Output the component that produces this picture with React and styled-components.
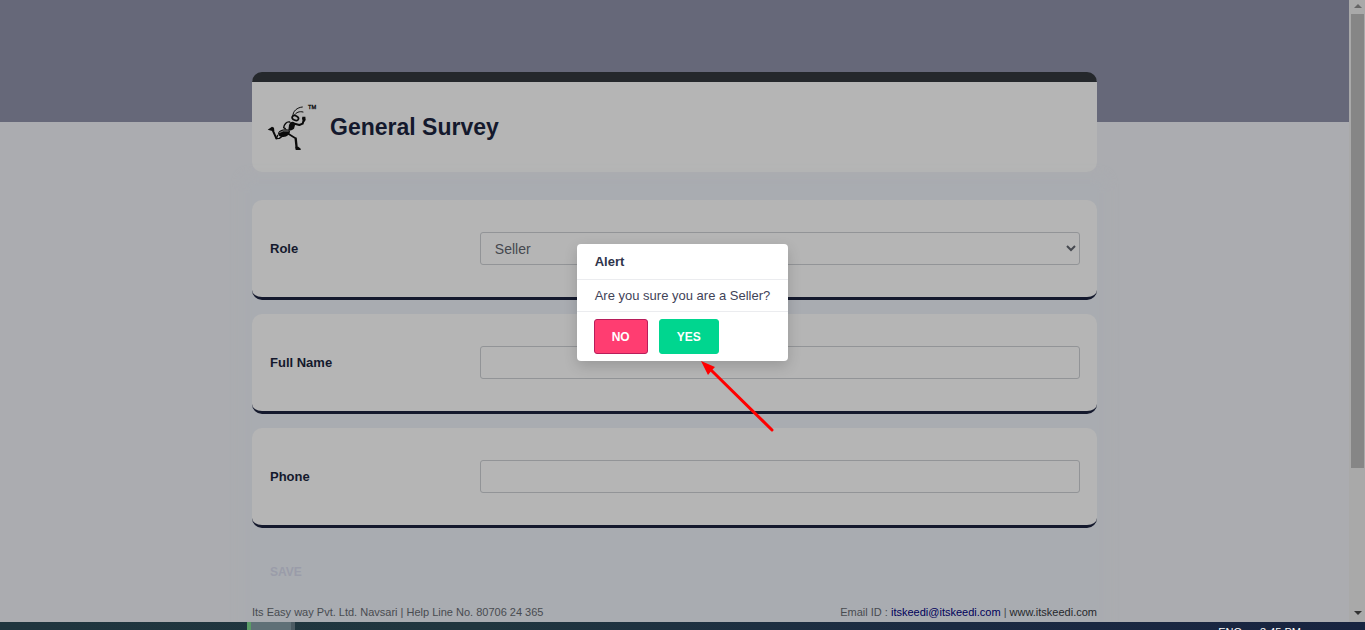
import React from 'react';
import styled, { createGlobalStyle } from 'styled-components';

const GlobalStyle = createGlobalStyle`
  *, *::before, *::after { box-sizing: border-box; }
  body {
    margin: 0;
    font-family: "Liberation Sans", Arial, sans-serif;
    font-size: 13px;
    color: #14192d;
  }
`;

const Screen = styled.div`
  position: relative;
  display: flex;
  flex-direction: column;
  height: 100vh;
  overflow: hidden;
`;

const Browser = styled.div`
  display: flex;
  flex: 1;
  min-height: 0;
`;

const Page = styled.main`
  flex: 1;
  min-width: 0;
  overflow: hidden;
  padding: 72px 16px 0;
  background: linear-gradient(#666879 122px, #abacb0 122px);
`;

const Content = styled.div`
  max-width: 845px;
  margin: 0 auto;
`;

const TitleCard = styled.header`
  display: flex;
  align-items: center;
  gap: 10px;
  height: 100px;
  padding: 0 14px;
  border-top: 10px solid #25282c;
  border-radius: 10px;
  background: #b5b5b5;
`;

const Logo = styled.svg`
  width: 54px;
  height: 54px;
`;

const Title = styled.h1`
  margin: 0;
  font-size: 23px;
  line-height: 28px;
`;

const Form = styled.form`
  display: flex;
  flex-direction: column;
  gap: 14px;
  margin-top: 14px;
  padding-top: 14px;
  background: #a9acb1;
  box-shadow: 0 0 12px 8px #a9acb1;
`;

const FieldCard = styled.div`
  display: flex;
  align-items: center;
  height: 100px;
  padding: 0 17px;
  border-bottom: 3px solid #14192d;
  border-radius: 10px;
  background: #b5b5b5;
`;

const Label = styled.label`
  flex: 0 0 26%;
  padding-left: 1px;
  font-weight: bold;
`;

const Input = styled.input`
  flex: 1;
  min-width: 0;
  height: 33px;
  padding: 0 14px;
  border: 1px solid #929497;
  border-radius: 3px;
  background: transparent;
  color: #45484f;
  font: 14px "Liberation Sans", Arial, sans-serif;
`;

const Select = styled(Input).attrs({ as: 'select' })`
  padding: 0 1px 0 10px;
`;

const SaveButton = styled.button`
  align-self: flex-start;
  height: 32px;
  margin-top: 14px;
  padding: 0 18px;
  border: 0;
  background: transparent;
  color: #9a9ca9;
  font: bold 12px "Liberation Sans", Arial, sans-serif;
`;

const Footer = styled.footer`
  display: flex;
  justify-content: space-between;
  height: 40px;
  padding-top: 2px;
  color: #484b50;
  font-size: 11px;
  line-height: 16px;
`;

const FooterLink = styled.a`
  color: ${({ $tone }) => $tone};
  text-decoration: none;
`;

const Scrollbar = styled.div`
  display: flex;
  flex-direction: column;
  align-items: center;
  width: 16px;
  padding-left: 1px;
  background: #a9a9a9;
`;

const ScrollArrow = styled.svg`
  width: 14px;
  height: 14px;
  fill: ${({ $tone }) => $tone};
`;

const ScrollTrack = styled.div`
  flex: 1;
  width: 13px;
`;

const ScrollThumb = styled.div`
  height: 76.5%;
  background: #868686;
`;

const Taskbar = styled.div`
  display: flex;
  height: 8px;
  overflow: hidden;
  padding: 0 64px 0 247px;
  background: linear-gradient(90deg, #1f353e, #20363f 35%, #1b2a42 70%, #182440);
`;

const ActiveTask = styled.div`
  width: 48px;
  border-left: 4px solid #5a9c66;
  border-right: 4px solid #4c5b63;
  background: #5f7077;
`;

const Tray = styled.div`
  display: flex;
  gap: 18px;
  margin-left: auto;
  padding-top: 3px;
  color: #fff;
  font-size: 11px;
  line-height: 14px;
`;

const Overlay = styled.div`
  position: absolute;
  inset: 0;
  display: flex;
  justify-content: center;
  align-items: flex-start;
  padding-top: 244px;
`;

const Modal = styled.section`
  position: relative;
  border-radius: 4px;
  background: #fff;
  box-shadow: 0 5px 14px rgba(0, 0, 0, 0.16);
`;

const ModalTitle = styled.h2`
  margin: 0;
  padding: 0 18px;
  color: #2f344a;
  font-size: 13px;
  line-height: 35px;
`;

const ModalText = styled.p`
  margin: 0;
  padding: 0 18px;
  border: solid #ebecef;
  border-width: 1px 0;
  color: #3f4358;
  font-size: 13px;
  line-height: 31px;
`;

const ModalActions = styled.div`
  display: flex;
  gap: 11px;
  padding: 7px 17px;
`;

const ModalButton = styled.button`
  height: 35px;
  padding: 0 17px;
  border: 1px solid ${({ $edge }) => $edge};
  border-radius: 3px;
  background: ${({ $fill }) => $fill};
  color: #fff;
  font: bold 12px "Liberation Sans", Arial, sans-serif;
`;

const Arrow = styled.svg`
  position: absolute;
  top: 117px;
  left: 124px;
  width: 74px;
  height: 72px;
`;

function Runner() {
  return (
    <Logo viewBox="12 6 162 162" role="img" aria-label="Running ant">
      <g fill="none" stroke="#0b0b0b" strokeLinecap="round" strokeLinejoin="round">
        <path d="M93 54C91 40 106 28 121 27" strokeWidth="3" />
        <path d="M97 52C102 43 112 39 123 42" strokeWidth="3" />
        <ellipse cx="100" cy="60" rx="10" ry="7" strokeWidth="5" transform="rotate(25 100 60)" />
        <path d="M98 77L112 81L122 77L126 62" strokeWidth="6" />
        <path d="M83 72C73 70 66 80 65 89L70 92" strokeWidth="4" />
        <path d="M47 112L43 122L52 121L62 114" strokeWidth="4" />
        <path d="M31 94L43 121" strokeWidth="6" />
        <path d="M80 108L98 119" strokeWidth="5" />
        <path d="M101 121L104 150" strokeWidth="7" />
      </g>
      <g fill="#0b0b0b">
        <path d="M17 95L30 86L36 89L37 99L28 98Z" />
        <path d="M120 63L121 56L130 56L131 66L126 73Z" />
        <path d="M85 73Q96 67 100 78L96 92Q86 101 79 95Q79 81 85 73Z" />
        <path d="M48 105Q54 93 73 94Q84 94 84 101Q82 114 64 117Q49 118 48 105Z" />
        <path d="M100 146L109 146L116 152L116 156L101 156Z" />
      </g>
      <path d="M52 104Q62 96 80 99" fill="none" stroke="#b5b5b5" strokeWidth="2" />
      <text x="138" y="34" fontSize="17" fill="#111" stroke="#111">TM</text>
    </Logo>
  );
}

export default function App() {
  return (
    <>
      <GlobalStyle />
      <Screen>
        <Browser>
          <Page>
            <Content>
              <TitleCard>
                <Runner />
                <Title>General Survey</Title>
              </TitleCard>
              <Form>
                <FieldCard>
                  <Label htmlFor="role">Role</Label>
                  <Select id="role" defaultValue="seller">
                    <option value="seller">Seller</option>
                  </Select>
                </FieldCard>
                <FieldCard>
                  <Label htmlFor="name">Full Name</Label>
                  <Input id="name" type="text" />
                </FieldCard>
                <FieldCard>
                  <Label htmlFor="phone">Phone</Label>
                  <Input id="phone" type="tel" />
                </FieldCard>
                <SaveButton type="button">SAVE</SaveButton>
                <Footer>
                  <span>Its Easy way Pvt. Ltd. Navsari | Help Line No. 80706 24 365</span>
                  <span>
                    Email ID :{' '}
                    <FooterLink $tone="#00005a" href="mailto:itskeedi@itskeedi.com">itskeedi@itskeedi.com</FooterLink>
                    {' | '}
                    <FooterLink $tone="#25282c" href="#site">www.itskeedi.com</FooterLink>
                  </span>
                </Footer>
              </Form>
            </Content>
          </Page>
          <Scrollbar>
            <ScrollArrow $tone="#666" viewBox="0 0 14 14"><path d="M7 4L11 8H3Z" /></ScrollArrow>
            <ScrollTrack><ScrollThumb /></ScrollTrack>
            <ScrollArrow $tone="#333" viewBox="0 0 14 14"><path d="M3 3H11L7 7Z" /></ScrollArrow>
          </Scrollbar>
        </Browser>
        <Taskbar>
          <ActiveTask />
          <Tray><span>ENG</span><span>3:45 PM</span></Tray>
        </Taskbar>
        <Overlay>
          <Modal role="dialog" aria-labelledby="alert-title">
            <ModalTitle id="alert-title">Alert</ModalTitle>
            <ModalText>Are you sure you are a Seller?</ModalText>
            <ModalActions>
              <ModalButton type="button" $fill="#ff3d71" $edge="#b81d5b">NO</ModalButton>
              <ModalButton type="button" $fill="#00d68f" $edge="#00d68f">YES</ModalButton>
            </ModalActions>
            <Arrow viewBox="0 0 74 72" aria-hidden="true">
              <path d="M10 9L71 69" stroke="#f00" strokeWidth="3" strokeLinecap="round" />
              <path d="M0 0L14 6L11 9L7 14Z" fill="#f00" />
            </Arrow>
          </Modal>
        </Overlay>
      </Screen>
    </>
  );
}
